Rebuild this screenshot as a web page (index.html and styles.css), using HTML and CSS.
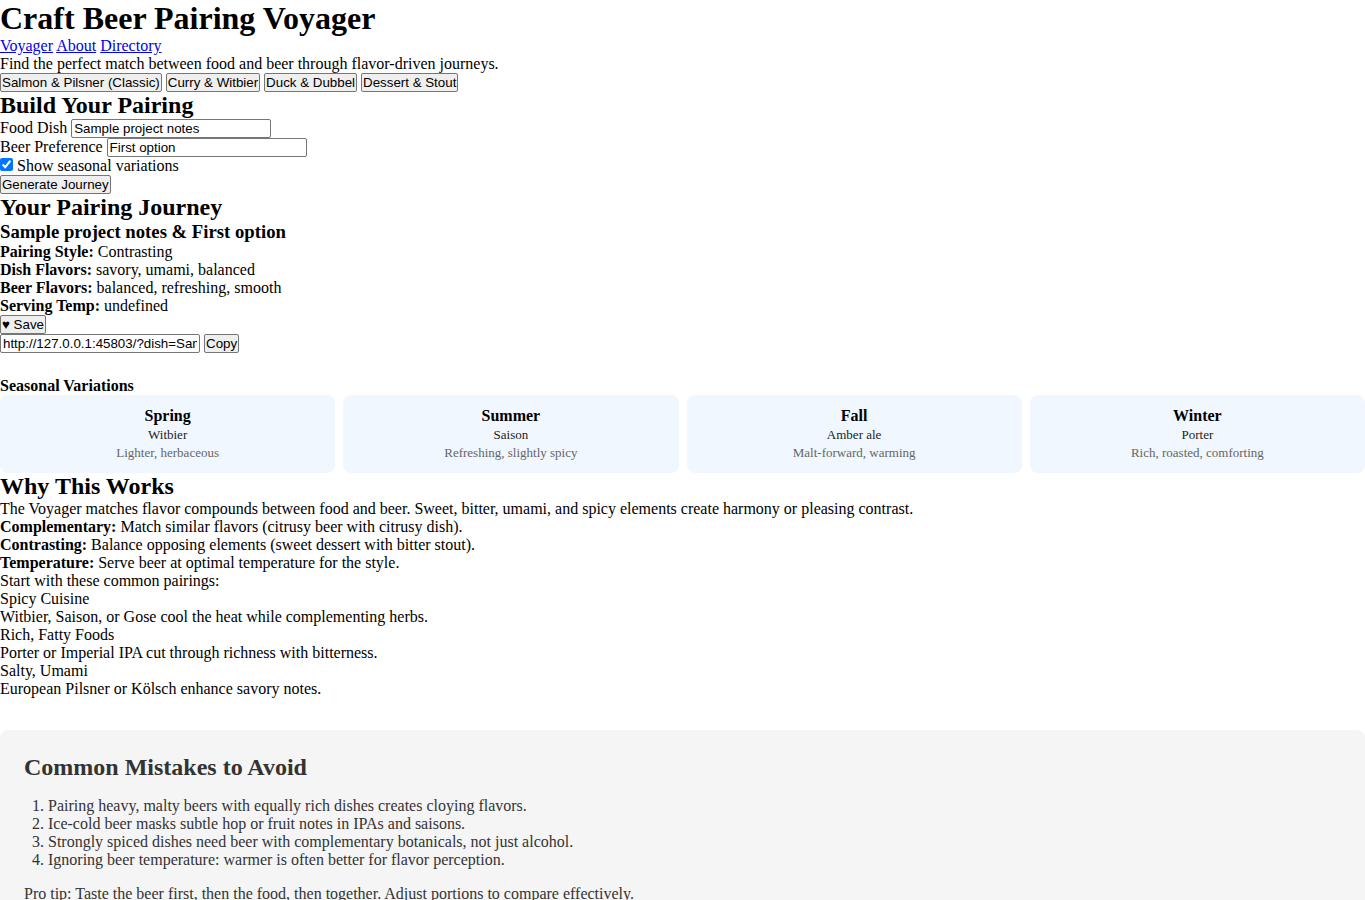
FILE: index.html
```html
<!DOCTYPE html>
<html lang="en">
<head>
<meta charset="utf-8">
<title>Craft Beer Pairing Voyager</title>
<link rel="stylesheet" href="styles.css">
</head>
<body>
<header class="site-header">
  <h1 class="title">Craft Beer Pairing Voyager</h1>
  <nav class="nav"><a href="#">Voyager</a> <a href="#">About</a> <a href="#">Directory</a></nav>
  <p class="lead">Find the perfect match between food and beer through flavor-driven journeys.</p>
  <div class="presets">
    <button class="btn" type="button">Salmon &amp; Pilsner (Classic)</button>
    <button class="btn" type="button">Curry &amp; Witbier</button>
    <button class="btn" type="button">Duck &amp; Dubbel</button>
    <button class="btn" type="button">Dessert &amp; Stout</button>
  </div>
</header>

<section class="builder">
  <h2 class="section-title">Build Your Pairing</h2>
  <div class="field"><label>Food Dish <input class="text-input" type="text" value="Sample project notes"></label></div>
  <div class="field"><label>Beer Preference <input class="text-input" type="text" value="First option"></label></div>
  <div class="field"><label><input class="check" type="checkbox" checked> Show seasonal variations</label></div>
  <button class="btn" type="button">Generate Journey</button>
</section>

<section class="journey">
  <h2 class="section-title">Your Pairing Journey</h2>
  <h3 class="journey-title">Sample project notes &amp; First option</h3>
  <p class="detail"><strong>Pairing Style:</strong> Contrasting</p>
  <p class="detail"><strong>Dish Flavors:</strong> savory, umami, balanced</p>
  <p class="detail"><strong>Beer Flavors:</strong> balanced, refreshing, smooth</p>
  <p class="detail"><strong>Serving Temp:</strong> undefined</p>
  <button class="btn" type="button">&#9829; Save</button>
  <div class="share">
    <input class="text-input" type="text" value="http://127.0.0.1:45803/?dish=Sample%20project%20notes&amp;beer=First%20option" readonly>
    <button class="btn" type="button">Copy</button>
  </div>

  <div class="seasonal">
    <h4 class="seasonal-title">Seasonal Variations</h4>
    <div class="season-grid">
      <div class="season-card">
        <div class="season-name">Spring</div>
        <div class="season-beer">Witbier</div>
        <div class="season-note">Lighter, herbaceous</div>
      </div>
      <div class="season-card">
        <div class="season-name">Summer</div>
        <div class="season-beer">Saison</div>
        <div class="season-note">Refreshing, slightly spicy</div>
      </div>
      <div class="season-card">
        <div class="season-name">Fall</div>
        <div class="season-beer">Amber ale</div>
        <div class="season-note">Malt-forward, warming</div>
      </div>
      <div class="season-card">
        <div class="season-name">Winter</div>
        <div class="season-beer">Porter</div>
        <div class="season-note">Rich, roasted, comforting</div>
      </div>
    </div>
  </div>
</section>

<section class="explain">
  <h2 class="section-title">Why This Works</h2>
  <p>The Voyager matches flavor compounds between food and beer. Sweet, bitter, umami, and spicy elements create harmony or pleasing contrast.</p>
  <p><strong>Complementary:</strong> Match similar flavors (citrusy beer with citrusy dish).</p>
  <p><strong>Contrasting:</strong> Balance opposing elements (sweet dessert with bitter stout).</p>
  <p><strong>Temperature:</strong> Serve beer at optimal temperature for the style.</p>
  <p>Start with these common pairings:</p>
  <div class="pairing">
    <div>Spicy Cuisine</div>
    <div>Witbier, Saison, or Gose cool the heat while complementing herbs.</div>
  </div>
  <div class="pairing">
    <div>Rich, Fatty Foods</div>
    <div>Porter or Imperial IPA cut through richness with bitterness.</div>
  </div>
  <div class="pairing">
    <div>Salty, Umami</div>
    <div>European Pilsner or Kölsch enhance savory notes.</div>
  </div>
</section>

<aside class="mistakes">
  <h2 class="mistakes-title">Common Mistakes to Avoid</h2>
  <ol class="mistakes-list">
    <li>Pairing heavy, malty beers with equally rich dishes creates cloying flavors.</li>
    <li>Ice-cold beer masks subtle hop or fruit notes in IPAs and saisons.</li>
    <li>Strongly spiced dishes need beer with complementary botanicals, not just alcohol.</li>
    <li>Ignoring beer temperature: warmer is often better for flavor perception.</li>
  </ol>
  <p class="tip">Pro tip: Taste the beer first, then the food, then together. Adjust portions to compare effectively.</p>
</aside>
</body>
</html>
```

FILE: styles.css
```css
body {
  margin: 0;
  font-family: "Liberation Serif", "Times New Roman", serif;
  font-size: 16px;
  color: #000;
  background: #fff;
}

h1, h2, h3, h4, p {
  margin: 0;
}

.title {
  font-size: 32px;
}

.section-title {
  font-size: 24px;
}

.journey-title {
  font-size: 18.72px;
}

/* compact native-looking controls */
.btn {
  font: 13.333px "Liberation Sans", Arial, sans-serif;
  color: #000;
  background: #efefef;
  border: 1px solid #767676;
  border-radius: 2px;
  padding: 1px;
  margin: 0;
}

.text-input {
  font: 13.333px "Liberation Sans", Arial, sans-serif;
  width: 200px;
  box-sizing: border-box;
  border: 1px solid #767676;
  border-radius: 2px;
  padding: 1px 2px;
  margin: 0;
}

.check {
  margin: 0;
  width: 13px;
  height: 13px;
}

.seasonal {
  margin-top: 24px;
}

.seasonal-title {
  font-size: 16px;
}

.season-grid {
  display: grid;
  grid-template-columns: repeat(4, 1fr);
  gap: 8px;
}

.season-card {
  background: #f0f7ff;
  border-radius: 8px;
  padding: 12px;
  text-align: center;
}

.season-name {
  font-weight: bold;
  margin-bottom: 2px;
}

.season-beer {
  font-size: 13px;
  color: #222;
}

.season-note {
  font-size: 13px;
  color: #666;
  margin-top: 2px;
}

.mistakes {
  margin-top: 32px;
  background: #f5f5f5;
  border-radius: 8px;
  padding: 24px;
  color: #333;
}

.mistakes-title {
  font-size: 24px;
  color: #333;
}

.mistakes-list {
  margin: 16px 0;
  padding-left: 24px;
}

.tip {
  margin-top: 16px;
}
```
